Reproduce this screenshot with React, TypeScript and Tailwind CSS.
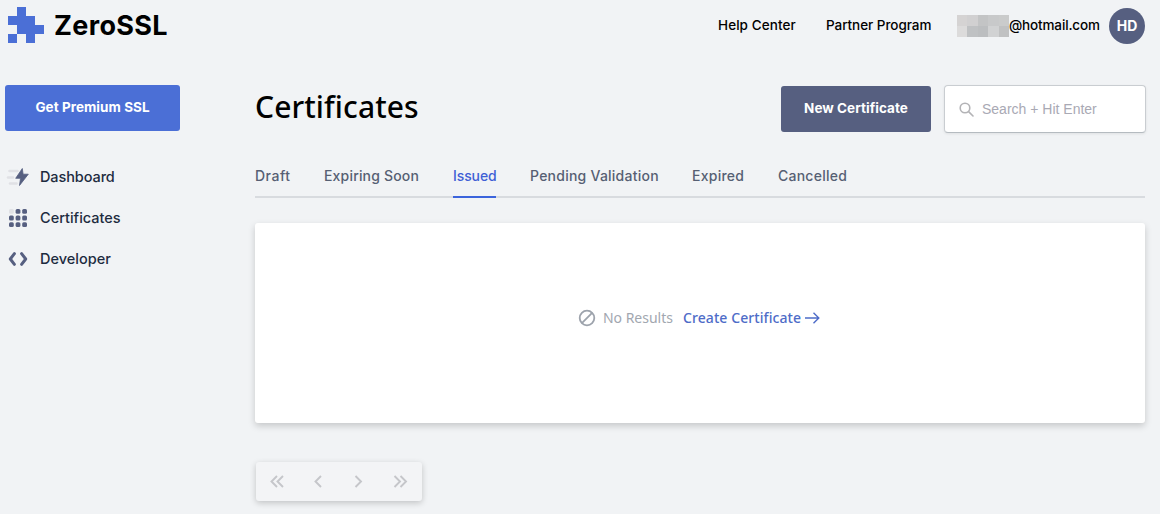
import React from "react";

const brand = "font-['Inter','Liberation_Sans',sans-serif]";
const humanist = "font-['Noto_Sans','Open_Sans',sans-serif]";

const mosaic = [
  "bg-[#d5d3d3]", "bg-[#d1d0d1]", "bg-[#c3c4c5]", "bg-[#c8c9ca]", "bg-[#cacbcb]",
  "bg-[#dcdbdb]", "bg-[#bfc1c3]", "bg-[#bcbec0]", "bg-[#d1d2d3]", "bg-[#c0c1c2]",
];

function Logo() {
  return (
    <svg width="36" height="36" viewBox="0 0 4 4" fill="#4b6fd6" shapeRendering="crispEdges">
      <path d="M1 0h1v1h1v1h1v1H3v1H2V3H1V2H0V1h1zM0 3h1v1H0z" />
    </svg>
  );
}

function BoltIcon() {
  return (
    <svg width="24" height="20" viewBox="0 0 24 20">
      <path d="M3.5 4h8M2 10.5h5M4 16.5h6.5" stroke="#e0e1e5" strokeWidth="2.6" strokeLinecap="round" />
      <path d="M16.3 1.5 9.7 11.3h4.8l-1 7.2 8.8-11.3h-5.2z" fill="#565f80" stroke="#565f80" strokeWidth=".8" strokeLinejoin="round" />
    </svg>
  );
}

function GridIcon() {
  const cells = [0, 1, 2, 3, 4, 5, 6, 7, 8];
  return (
    <svg width="24" height="20" viewBox="0 0 24 20">
      {cells.map((i) => (
        <rect key={i} x={3 + (i % 3) * 6.6} y={1 + Math.floor(i / 3) * 6.6} width="4.8" height="4.8" rx="1.5" fill={i === 0 ? "#e0e1e5" : "#565f80"} />
      ))}
    </svg>
  );
}

function CodeIcon() {
  return (
    <svg width="24" height="20" viewBox="0 0 24 20" fill="none" stroke="#565f80" strokeWidth="3" strokeLinecap="round" strokeLinejoin="round">
      <path d="M8.4 4.7 4.3 10l4.1 5.3M15.6 4.7l4.1 5.3-4.1 5.3" />
    </svg>
  );
}

const nav = [
  { label: "Dashboard", icon: <BoltIcon />, track: "tracking-[-0.1px]" },
  { label: "Certificates", icon: <GridIcon />, track: "tracking-[0px]" },
  { label: "Developer", icon: <CodeIcon />, track: "tracking-[0px]" },
];

const tabs = [
  { label: "Draft", width: "w-[35px]", track: "tracking-[0.5px]" },
  { label: "Expiring Soon", width: "w-[95px]", track: "tracking-[0.18px]" },
  { label: "Issued", width: "w-[43px]", track: "tracking-[-0.1px]", active: true },
  { label: "Pending Validation", width: "w-[128px]", track: "tracking-[0.24px]" },
  { label: "Expired", width: "w-[52px]", track: "tracking-[0.25px]" },
  { label: "Cancelled", width: "w-[69px]", track: "tracking-[0.24px]" },
];

const pages = [
  { name: "First page", d: "m13 4-5.5 5.5L13 15M7 4 1.5 9.5 7 15", width: "w-[14px]" },
  { name: "Previous page", d: "m7 4-5.5 5.5L7 15", width: "w-[10px]" },
  { name: "Next page", d: "m1.5 4L7 9.5 1.5 15", width: "w-[9px]" },
  { name: "Last page", d: "m1.5 4L7 9.5 1.5 15M7.5 4l5.5 5.5L7.5 15", width: "w-[14px]" },
];

export default function App() {
  return (
    <div className={`h-[514px] w-[1160px] overflow-hidden bg-[#f1f3f5] whitespace-nowrap ${brand}`}>
      <header className="flex h-[50px] items-start justify-between pt-[7px] pr-[15px] pl-2">
        <div className="flex gap-[10px]">
          <Logo />
          <span className="w-[115px] pt-px text-[27px] leading-[36px] font-bold tracking-[0.35px] text-black">ZeroSSL</span>
        </div>
        <div className="flex h-9 items-center pt-px text-[13.5px] font-medium text-black">
          <a className="mr-[30px] w-[78px] tracking-[0.08px]">Help Center</a>
          <a className="mr-[26px] w-[105px] tracking-[-0.05px]">Partner Program</a>
          <div className="grid w-[52px] grid-cols-5 grid-rows-2">
            {mosaic.map((color, i) => (
              <span key={i} className={`h-[11px] ${color}`} />
            ))}
          </div>
          <span className="w-[91px] tracking-[-0.15px]">@hotmail.com</span>
          <span className="ml-[9px] flex size-9 items-center justify-center rounded-full bg-[#565f80] text-[14px] font-bold text-white">HD</span>
        </div>
      </header>

      <div className="flex pt-[35px]">
        <aside className="w-[255px] shrink-0 pl-[5px]">
          <button className="flex h-[46px] w-[175px] items-center justify-center rounded-[3px] bg-[#4b6fd6] pb-px text-[13.5px] font-bold tracking-[0.05px] text-white">
            Get Premium SSL
          </button>
          <nav className="mt-[25px] flex flex-col">
            {nav.map((item) => (
              <a key={item.label} className={`flex h-[41px] items-center gap-[10px] pl-px text-[14.5px] font-medium text-[#1d2b3f] ${item.track}`}>
                {item.icon}
                {item.label}
              </a>
            ))}
          </nav>
        </aside>

        <main className="w-[890px]">
          <div className="-mr-px flex h-[48px] items-center">
            <h1 className={`grow pb-[5px] text-[30px] leading-10 font-medium tracking-[0.1px] text-black ${humanist}`}>Certificates</h1>
            <button className="mr-[13px] flex h-[46px] w-[150px] items-center justify-center rounded-[3px] bg-[#565f80] pb-px text-[13.5px] font-bold tracking-[0.05px] text-white">
              New Certificate
            </button>
            <div className="flex h-[48px] w-[202px] items-center rounded-[4px] border border-[#c9cdd1] border-b-[#b5bbc0] bg-white pl-[14px] shadow-[0_1px_3px_rgba(0,0,0,0.08)]">
              <svg width="15" height="15" viewBox="0 0 15 15" fill="none" stroke="#b3b3b6" strokeWidth="1.6" strokeLinecap="round">
                <circle cx="6" cy="6" r="4.8" />
                <path d="m9.6 9.6 4.4 4.4" />
              </svg>
              <span className="ml-[8px] font-['Liberation_Sans',Arial,sans-serif] text-[14px] text-[#a9a9b4]">Search + Hit Enter</span>
            </div>
          </div>

          <div className="mt-[22px] flex h-[43px] items-start gap-[34px] border-b-2 border-[#d8dbdf]">
            {tabs.map((tab) => (
              <a
                key={tab.label}
                className={`h-[43px] shrink-0 pt-[10px] text-[14px] leading-[22px] font-medium ${tab.width} ${tab.track} ${
                  tab.active ? "border-b-2 border-[#3b64dc] text-[#3f5fd5]" : "text-[#565f73]"
                }`}
              >
                {tab.label}
              </a>
            ))}
          </div>

          <section className={`mt-[25px] flex h-[200px] items-center justify-center rounded-[3px] bg-white pr-[2px] pb-[10px] text-[14px] shadow-[0_3px_7px_rgba(0,0,0,0.18)] ${humanist}`}>
            <svg width="18" height="18" viewBox="0 0 18 18" fill="none" stroke="#9da3ac" strokeWidth="1.8">
              <circle cx="9" cy="9" r="7.3" />
              <path d="m3.9 14.1 10.2-10.2" />
            </svg>
            <span className="ml-[7px] pb-[2px] text-[#a2a7b0]">No Results</span>
            <a className="ml-[10px] pb-[2px] font-medium tracking-[0.08px] text-[#4e6cc8]">Create Certificate</a>
            <svg className="ml-[4px]" width="15" height="14" viewBox="0 0 15 14" fill="none" stroke="#4e6cc8" strokeWidth="1.4">
              <path d="M0 7h13.5M8.5 1.8 13.8 7l-5.3 5.2" />
            </svg>
          </section>

          <div className="mt-[39px] ml-px flex h-[39px] w-[166px] items-center justify-between rounded-[3px] bg-[#f3f4f6] pr-[14px] pb-px pl-[15px] shadow-[0_2px_6px_rgba(0,0,0,0.2)]">
            {pages.map((page) => (
              <button key={page.name} aria-label={page.name} className={page.width}>
                <svg className="-ml-px overflow-visible" width="14" height="19" viewBox="0 0 14 19" fill="none" stroke="#c5c6ca" strokeWidth="1.9">
                  <path d={page.d} />
                </svg>
              </button>
            ))}
          </div>
        </main>
      </div>
    </div>
  );
}
